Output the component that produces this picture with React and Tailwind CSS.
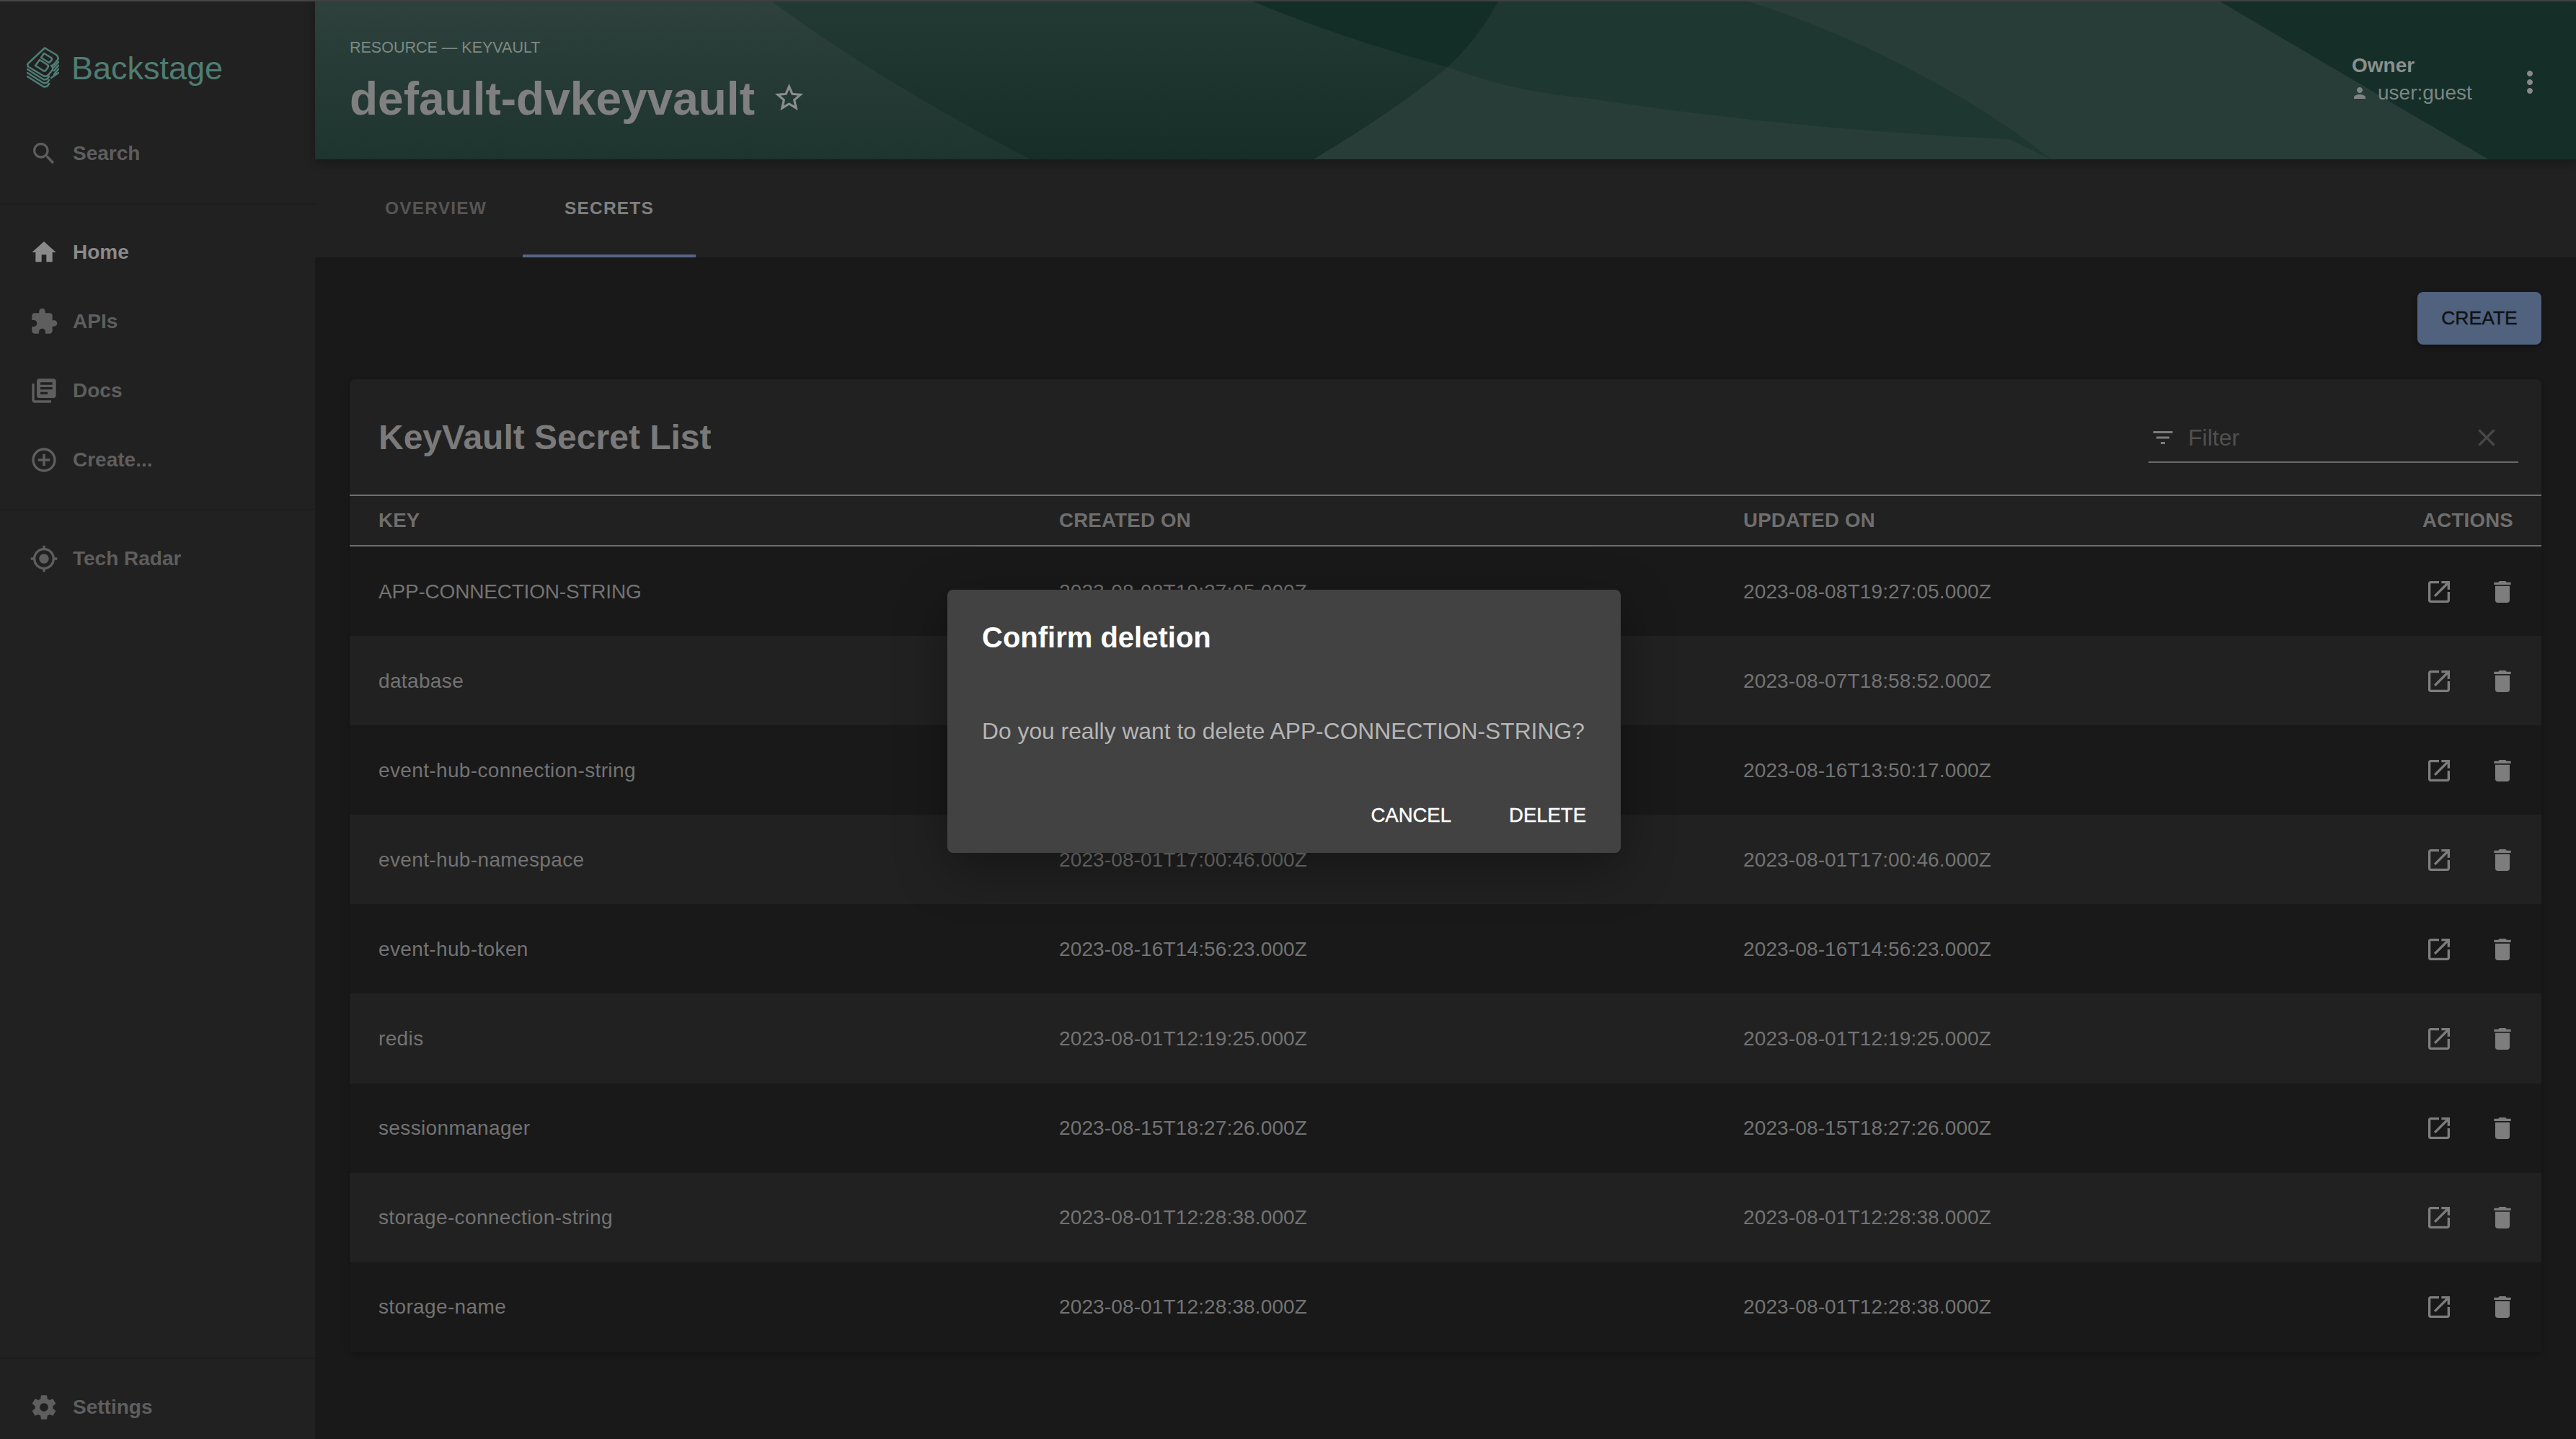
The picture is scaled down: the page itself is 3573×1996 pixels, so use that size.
const D = {
  search: "M15.5 14h-.79l-.28-.27C15.41 12.59 16 11.11 16 9.5 16 5.91 13.09 3 9.5 3S3 5.91 3 9.5 5.91 16 9.5 16c1.61 0 3.09-.59 4.23-1.57l.27.28v.79l5 4.99L20.49 19l-4.99-5zm-6 0C7.01 14 5 11.99 5 9.5S7.01 5 9.5 5 14 7.01 14 9.5 11.99 14 9.5 14z",
  home: "M10 20v-6h4v6h5v-8h3L12 3 2 12h3v8z",
  ext: "M20.5 11H19V7c0-1.1-.9-2-2-2h-4V3.5C13 2.12 11.88 1 10.5 1S8 2.12 8 3.5V5H4c-1.1 0-1.99.9-1.99 2v3.8H3.5c1.49 0 2.7 1.21 2.7 2.7s-1.21 2.7-2.7 2.7H2V20c0 1.1.9 2 2 2h3.8v-1.5c0-1.49 1.21-2.7 2.7-2.7 1.49 0 2.7 1.21 2.7 2.7V22H17c1.1 0 2-.9 2-2v-4h1.5c1.38 0 2.5-1.12 2.5-2.5S21.88 11 20.5 11z",
  docs: "M4 6H2v14c0 1.1.9 2 2 2h14v-2H4V6zm16-4H8c-1.1 0-2 .9-2 2v12c0 1.1.9 2 2 2h12c1.1 0 2-.9 2-2V4c0-1.1-.9-2-2-2zm-1 9H9V9h10v2zm-4 4H9v-2h6v2zm4-8H9V5h10v2z",
  add: "M13 7h-2v4H7v2h4v4h2v-4h4v-2h-4V7zm-1-5C6.48 2 2 6.48 2 12s4.48 10 10 10 10-4.48 10-10S17.52 2 12 2zm0 18c-4.41 0-8-3.59-8-8s3.59-8 8-8 8 3.59 8 8-3.59 8-8 8z",
  radar: "M12 8c-2.21 0-4 1.79-4 4s1.79 4 4 4 4-1.79 4-4-1.79-4-4-4zm8.94 3c-.46-4.17-3.77-7.48-7.94-7.94V1h-2v2.06C6.83 3.52 3.52 6.83 3.06 11H1v2h2.06c.46 4.17 3.77 7.48 7.94 7.94V23h2v-2.06c4.17-.46 7.48-3.77 7.94-7.94H23v-2h-2.06zM12 19c-3.87 0-7-3.13-7-7s3.13-7 7-7 7 3.13 7 7-3.13 7-7 7z",
  settings: "M19.43 12.98c.04-.32.07-.64.07-.98s-.03-.66-.07-.98l2.11-1.65c.19-.15.24-.42.12-.64l-2-3.46c-.12-.22-.39-.3-.61-.22l-2.49 1c-.52-.4-1.08-.73-1.69-.98l-.38-2.65C14.46 2.18 14.25 2 14 2h-4c-.25 0-.46.18-.49.42l-.38 2.65c-.61.25-1.17.59-1.69.98l-2.49-1c-.23-.09-.49 0-.61.22l-2 3.46c-.13.22-.07.49.12.64l2.11 1.65c-.04.32-.07.65-.07.98s.03.66.07.98l-2.11 1.65c-.19.15-.24.42-.12.64l2 3.46c.12.22.39.3.61.22l2.49-1c.52.4 1.08.73 1.69.98l.38 2.65c.03.24.24.42.49.42h4c.25 0 .46-.18.49-.42l.38-2.65c.61-.25 1.17-.59 1.69-.98l2.49 1c.23.09.49 0 .61-.22l2-3.46c.12-.22.07-.49-.12-.64l-2.11-1.65zM12 15.5c-1.93 0-3.5-1.57-3.5-3.5s1.57-3.5 3.5-3.5 3.5 1.57 3.5 3.5-1.57 3.5-3.5 3.5z",
  star: "M22 9.24l-7.19-.62L12 2 9.19 8.63 2 9.24l5.46 4.73L5.82 21 12 17.27 18.18 21l-1.63-7.03L22 9.24zM12 15.4l-3.76 2.27 1-4.28-3.32-2.88 4.38-.38L12 6.1l1.71 4.04 4.38.38-3.32 2.88 1 4.28L12 15.4z",
  person: "M12 12c2.21 0 4-1.79 4-4s-1.79-4-4-4-4 1.79-4 4 1.79 4 4 4zm0 2c-2.67 0-8 1.34-8 4v2h16v-2c0-2.66-5.33-4-8-4z",
  more: "M12 8c1.1 0 2-.9 2-2s-.9-2-2-2-2 .9-2 2 .9 2 2 2zm0 2c-1.1 0-2 .9-2 2s.9 2 2 2 2-.9 2-2-.9-2-2-2zm0 6c-1.1 0-2 .9-2 2s.9 2 2 2 2-.9 2-2-.9-2-2-2z",
  filter: "M10 18h4v-2h-4v2zM3 6v2h18V6H3zm3 7h12v-2H6v2z",
  clear: "M19 6.41L17.59 5 12 10.59 6.41 5 5 6.41 10.59 12 5 17.59 6.41 19 12 13.41 17.59 19 19 17.59 13.41 12z",
  open: "M19 19H5V5h7V3H5c-1.11 0-2 .9-2 2v14c0 1.1.89 2 2 2h14c1.1 0 2-.9 2-2v-7h-2v7zM14 3v2h3.59l-9.83 9.83 1.41 1.41L19 6.41V10h2V3h-7z",
  del: "M6 19c0 1.1.9 2 2 2h8c1.1 0 2-.9 2-2V7H6v12zM19 4h-3.5l-1-1h-5l-1 1H5v2h14V4z",
};

function Icon({ d, className }) {
  return (
    <svg viewBox="0 0 24 24" className={className} fill="currentColor">
      <path d={d} />
    </svg>
  );
}

function Logo() {
  return (
    <svg viewBox="0 0 45 57" className="w-[45px] h-[57px] shrink-0" fill="none" stroke="#4f7d73" strokeWidth="2.6" strokeLinejoin="round" strokeLinecap="round">
      <path d="M25 1.5 L41 11 Q45 14 43 18 L38 24 Q36 26 34 26 Q38 29 35 33 L30 39 Q27 42 23 40 L3 28 Q0 26 2 23 Z" />
      <path d="M24 9 L34 15 Q36 17 34 19 L31 22 L20 15 Z" />
      <path d="M18 18 L29 25 Q31 27 29 29 L26 33 Q25 34 23 33 L12 26 Z" />
      <path d="M1 31 L23 45 Q26 46 29 44 L31 41" />
      <path d="M1 36 L23 50 Q26 51 29 49 L31 46" />
      <path d="M1 41 L23 55 Q26 56 29 54 L31 51" />
      <path d="M38 28 L44 21 M38 33 L44 26 M38 38 L44 31 M34 43 L44 36" />
    </svg>
  );
}

function NavItem({ d, label, active }) {
  return (
    <div className="flex items-center h-[96px] pl-[41px] shrink-0">
      <Icon d={d} className={`w-[40px] h-[40px] ${active ? "text-[#8a8a8a]" : "text-[#5e5e5e]"}`} />
      <span className={`ml-[20px] text-[28px] font-bold ${active ? "text-[#8a8a8a]" : "text-[#5e5e5e]"}`}>{label}</span>
    </div>
  );
}

function HeaderArt() {
  return (
    <svg viewBox="0 0 3136 219" preserveAspectRatio="none" className="absolute inset-0 w-full h-full">
      <defs>
        <linearGradient id="lg1" x1="0" y1="0" x2="0" y2="1">
          <stop offset="0" stopColor="#2e413c" />
          <stop offset="1" stopColor="#1e342e" />
        </linearGradient>
        <linearGradient id="lg2" x1="0" y1="0" x2="0" y2="1">
          <stop offset="0" stopColor="#233a34" />
          <stop offset="1" stopColor="#172e28" />
        </linearGradient>
      </defs>
      <rect width="3136" height="219" fill="url(#lg2)" />
      <path d="M0 -2 H631 Q778 108 992 219 H0 Z" fill="url(#lg1)" />
      <path d="M1296 -2 H1642 Q1615 50 1571 91 Q1420 50 1296 -2 Z" fill="#132d27" />
      <path d="M1642 -2 H1982 C2120 40 2300 130 2407 219 H1385 Q1500 150 1571 91 Q1615 50 1642 -2 Z" fill="#1f3731" />
      <path d="M1982 -2 C2120 40 2300 130 2407 219 H3015 Q2825 108 2639 -2 Z" fill="#293d38" />
      <path d="M2639 -2 H3136 V219 H3015 Q2825 108 2639 -2 Z" fill="#152f28" />
      <path d="M1385 219 Q1500 150 1571 91 Q1660 125 1763 134 Q2050 178 2350 191 L2407 219 Z" fill="#293d38" />
    </svg>
  );
}

const rows = [
  ["APP-CONNECTION-STRING", "2023-08-08T19:27:05.000Z", "2023-08-08T19:27:05.000Z"],
  ["database", "2023-08-07T18:58:52.000Z", "2023-08-07T18:58:52.000Z"],
  ["event-hub-connection-string", "2023-08-16T13:50:17.000Z", "2023-08-16T13:50:17.000Z"],
  ["event-hub-namespace", "2023-08-01T17:00:46.000Z", "2023-08-01T17:00:46.000Z"],
  ["event-hub-token", "2023-08-16T14:56:23.000Z", "2023-08-16T14:56:23.000Z"],
  ["redis", "2023-08-01T12:19:25.000Z", "2023-08-01T12:19:25.000Z"],
  ["sessionmanager", "2023-08-15T18:27:26.000Z", "2023-08-15T18:27:26.000Z"],
  ["storage-connection-string", "2023-08-01T12:28:38.000Z", "2023-08-01T12:28:38.000Z"],
  ["storage-name", "2023-08-01T12:28:38.000Z", "2023-08-01T12:28:38.000Z"],
];

export default function App() {
  return (
    <div className="relative w-[3573px] h-[1996px] overflow-hidden flex flex-col bg-[#191919] font-['Liberation_Sans',Arial,sans-serif]">
      <div className="h-[2px] shrink-0 bg-[#454545]" />
      <div className="flex flex-1 min-h-0">
        {/* Sidebar */}
        <aside className="w-[437px] shrink-0 bg-[#212121] flex flex-col">
          <div className="h-[163px] shrink-0 flex items-start pt-[63px] pl-[37px]">
            <Logo />
            <span className="ml-[17px] text-[45px] leading-[60px] text-[#4f7d73]">Backstage</span>
          </div>
          <NavItem d={D.search} label="Search" />
          <div className="h-[2px] mt-[21px] shrink-0 bg-[#1d1d1d]" />
          <div className="pt-[18px]">
            <NavItem d={D.home} label="Home" active />
            <NavItem d={D.ext} label="APIs" />
            <NavItem d={D.docs} label="Docs" />
            <NavItem d={D.add} label="Create..." />
          </div>
          <div className="h-[2px] mt-[20px] shrink-0 bg-[#1d1d1d]" />
          <div className="pt-[19px]">
            <NavItem d={D.radar} label="Tech Radar" />
          </div>
          <div className="mt-auto h-[2px] shrink-0 bg-[#1d1d1d]" />
          <div className="h-[111px] shrink-0 pt-[19px]">
            <NavItem d={D.settings} label="Settings" />
          </div>
        </aside>

        {/* Main */}
        <main className="flex-1 min-w-0 flex flex-col">
          <header className="relative z-10 h-[219px] shrink-0 shadow-[0_4px_14px_rgba(0,0,0,0.3)] overflow-visible">
            <HeaderArt />
            <div className="relative h-full flex items-start pl-[48px]">
              <div className="flex-1 min-w-0 pt-[51px]">
                <div className="text-[21.5px] leading-[26px] text-[#7f8985]">RESOURCE — KEYVAULT</div>
                <div className="flex items-center mt-[18px]">
                  <span className="text-[64px] leading-[80px] font-bold text-[#808080]">default-dvkeyvault</span>
                  <Icon d={D.star} className="w-[47px] h-[47px] ml-[24px] -mt-[3px] text-[#8a8f8d]" />
                </div>
              </div>
              <div className="pt-[72px] w-[241px] shrink-0">
                <div className="text-[28px] leading-[34px] font-bold text-[#8c8f8e]">Owner</div>
                <div className="flex items-center mt-[4px] text-[#7f8583]">
                  <Icon d={D.person} className="w-[24px] h-[24px] -ml-[1px] mr-[13px]" />
                  <span className="text-[28px] leading-[34px]">user:guest</span>
                </div>
              </div>
              <div className="pt-[88px] w-[88px] shrink-0 -ml-[18px]">
                <Icon d={D.more} className="w-[48px] h-[48px] text-[#8a8a8a]" />
              </div>
            </div>
          </header>

          <nav className="h-[136px] shrink-0 bg-[#212121] flex items-stretch pl-[47px]">
            <div className="w-[241px] flex items-center justify-center pt-[1px] text-[24.5px] font-bold tracking-[1.2px] text-[#555555]">OVERVIEW</div>
            <div className="w-[240px] border-b-[4px] border-[#566685] flex items-center justify-center pt-[5px] text-[24.5px] font-bold tracking-[1.2px] text-[#808080]">SECRETS</div>
          </nav>

          <section className="flex-1 min-h-0 px-[48px] pt-[48px]">
            <div className="flex justify-end">
              <div className="h-[73px] w-[172px] rounded-[8px] bg-[#51627e] shadow-[0_3px_6px_rgba(0,0,0,0.35)] flex items-center justify-center text-[26.5px] [-webkit-text-stroke:0.4px_#0e1216] text-[#0e1216]">CREATE</div>
            </div>

            <div className="mt-[48px] rounded-[8px] bg-[#212121] shadow-[0_4px_8px_rgba(0,0,0,0.25)]">
              <div className="h-[160px] flex items-center pl-[40px] pr-[32px]">
                <h2 className="flex-1 mt-[2px] text-[48px] font-bold leading-none text-[#7a7a7a]">KeyVault Secret List</h2>
                <div className="w-[513px] h-[64px] mt-[7px] border-b-[2px] border-[#6a6a6a] flex items-center pb-[3px] relative">
                  <Icon d={D.filter} className="ml-[2px] w-[36px] h-[36px] text-[#7c7c7c]" />
                  <span className="ml-[17px] text-[32px] text-[#505050]">Filter</span>
                  <Icon d={D.clear} className="ml-auto mr-[24px] w-[40px] h-[40px] text-[#484848]" />
                </div>
              </div>
              <div className="h-[72px] border-y-[2px] border-[#707070] grid grid-cols-[944px_949px_1fr_auto] items-center pl-[40px] pr-[39px] text-[27.6px] tracking-[0.25px] font-bold text-[#6e6e6e]">
                <span>KEY</span>
                <span>CREATED ON</span>
                <span>UPDATED ON</span>
                <span>ACTIONS</span>
              </div>
              <div>
                {rows.map((r, i) => (
                  <div key={r[0]} className={`h-[124.1px] grid grid-cols-[944px_949px_1fr_auto] items-center pl-[40px] pr-[34px] pt-[1px] text-[28px] text-[#737373] ${i % 2 ? "bg-[#212121]" : "bg-[#191919]"}`}>
                    <span className={i === 0 ? "tracking-[-0.2px]" : "tracking-[0.36px]"}>{r[0]}</span>
                    <span className="tracking-[0.13px]">{r[1]}</span>
                    <span className="tracking-[0.13px]">{r[2]}</span>
                    <span className="flex items-center gap-[48px] text-[#7d7d7d]">
                      <Icon d={D.open} className="w-[40px] h-[40px]" />
                      <Icon d={D.del} className="w-[40px] h-[40px]" />
                    </span>
                  </div>
                ))}
              </div>
            </div>
          </section>
        </main>
      </div>

      {/* Dialog */}
      <div className="absolute left-[1314px] top-[818px] w-[934px] h-[365px] rounded-[8px] bg-[#424242] shadow-[0_22px_70px_rgba(0,0,0,0.35)] flex flex-col pl-[48px] pr-[48px]">
        <div className="pt-[42px] text-[40px] leading-[48px] font-bold text-white">Confirm deletion</div>
        <div className="mt-[84px] text-[31.8px] leading-[44px] text-[#b5b5b5] whitespace-nowrap">Do you really want to delete APP-CONNECTION-STRING?</div>
        <div className="mt-auto pb-[32px] flex justify-end gap-[80px] text-[27.5px] leading-[40px] text-white [-webkit-text-stroke:0.4px_#ffffff]">
          <span>CANCEL</span>
          <span>DELETE</span>
        </div>
      </div>
    </div>
  );
}
